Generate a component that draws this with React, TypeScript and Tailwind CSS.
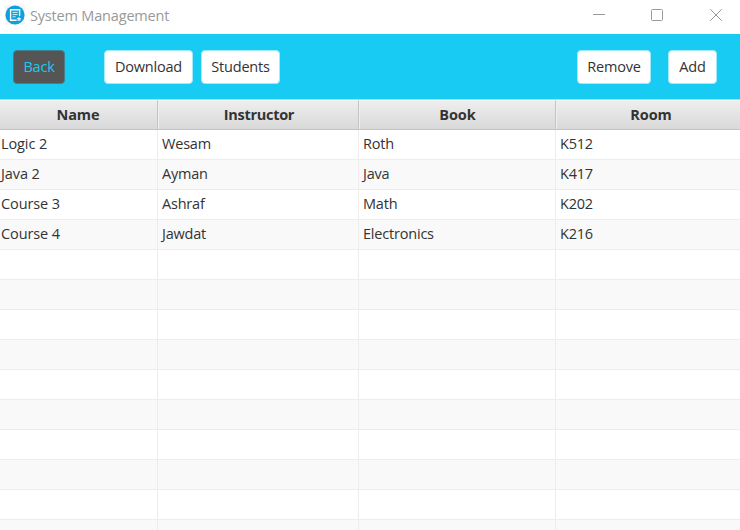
import type { ReactNode } from 'react';

const columns = [
  { title: 'Name', width: 'w-[158px]', pad: 'pl-px', head: 'pr-px', track: 'tracking-[-0.15px]' },
  { title: 'Instructor', width: 'w-[201px]', pad: 'pl-1', head: 'pl-px', track: 'tracking-[-0.3px]' },
  { title: 'Book', width: 'w-[197px]', pad: 'pl-1', head: 'pr-0', track: 'tracking-[-0.1px]' },
  { title: 'Room', width: 'w-[190px]', pad: 'pl-1', head: 'pr-0', track: 'tracking-[-0.1px]' },
];

const courses = [
  ['Logic 2', 'Wesam', 'Roth', 'K512'],
  ['Java 2', 'Ayman', 'Java', 'K417'],
  ['Course 3', 'Ashraf', 'Math', 'K202'],
  ['Course 4', 'Jawdat', 'Electronics', 'K216'],
];

const rows = [...courses, ...Array.from({ length: 10 }, () => ['', '', '', ''])];

function Button({ width, dark, children }: { width: string; dark?: boolean; children: ReactNode }) {
  return (
    <button
      className={`h-[34px] shrink-0 rounded-[4px] border pb-px text-center tracking-[-0.2px] ${width} ${
        dark ? 'border-[#467f8c] bg-[#555555] text-[#17cbf2]' : 'border-[#a2e9fa] bg-white text-[#333333]'
      }`}
    >
      {children}
    </button>
  );
}

function AppIcon() {
  return (
    <svg width="20" height="20" viewBox="0 0 20 20" className="shrink-0">
      <rect width="20" height="20" fill="#f8f5f4" />
      <circle cx="10" cy="10" r="9.6" fill="#0da0dc" />
      <path d="M14.6 11V4.8H5.6v10.4h6" fill="none" stroke="#fff" strokeWidth="1.4" />
      <path d="M7.6 7.4h5M7.6 9.6h5M7.6 11.8h3" stroke="#d3eff9" strokeWidth="1" />
      <path d="M14 11.6l.8 1.4 1.6.3-1.1 1.1.3 1.7-1.6-.7-1.6.7.3-1.7-1.1-1.1 1.6-.3z" fill="#d8f1fa" />
    </svg>
  );
}

export default function App() {
  return (
    <div className="flex h-[530px] w-[740px] flex-col overflow-hidden bg-white font-['Open_Sans','Noto_Sans',sans-serif] text-[14.5px] leading-[20px] text-[#333333]">
      <header className="flex h-[34px] shrink-0 items-start pl-[5px] pt-[5px]">
        <AppIcon />
        <h1 className="ml-[5px] mt-px grow text-[14.5px] leading-[20px] tracking-[-0.18px] text-[#999999]">System Management</h1>
        <svg width="150" height="20" viewBox="590 5 150 20" fill="none" stroke="#999999">
          <path d="M593 14.5h12" />
          <rect x="651.5" y="9.5" width="11" height="11" rx="1" />
          <path d="M710.3 9.3l11.4 11.4M721.7 9.3l-11.4 11.4" />
        </svg>
      </header>
      <nav className="flex h-[65px] shrink-0 bg-[#17cbf2] pl-[13px] pr-[23px] pt-4">
        <Button width="w-[52px]" dark>Back</Button>
        <div className="ml-[39px] flex grow gap-2">
          <Button width="w-[89px]">Download</Button>
          <Button width="w-[79px]">Students</Button>
        </div>
        <div className="flex gap-[17px]">
          <Button width="w-[74px]">Remove</Button>
          <Button width="w-[49px]">Add</Button>
        </div>
      </nav>
      <main className="flex w-[746px] flex-col">
        <div className="flex h-[31px] shrink-0 border-y border-t-[#cfcfcf] border-b-[#c3c3c3] bg-linear-to-b from-[#efefef] to-[#d9d9d9]">
          {columns.map((c, i) => (
            <div
              key={c.title}
              className={`shrink-0 border-r border-t border-r-[#c3c3c3] border-t-[#f7f7f7] pt-[4px] text-center font-bold ${
                i > 0 ? 'border-l border-l-[#f0f0f0]' : ''
              } ${c.width} ${c.head} ${c.track}`}
            >
              {c.title}
            </div>
          ))}
        </div>
        {rows.map((row, i) => (
          <div key={i} className={`flex h-[30px] shrink-0 border-b border-[#ededed] ${i % 2 ? 'bg-[#f9f9f9]' : 'bg-white'}`}>
            {columns.map((c, j) => (
              <div key={c.title} className={`shrink-0 border-r border-[#ededed] pt-[4px] ${j === 0 ? 'tracking-[-0.1px]' : 'tracking-[-0.2px]'} ${c.width} ${c.pad}`}>
                {row[j]}
              </div>
            ))}
          </div>
        ))}
      </main>
    </div>
  );
}
